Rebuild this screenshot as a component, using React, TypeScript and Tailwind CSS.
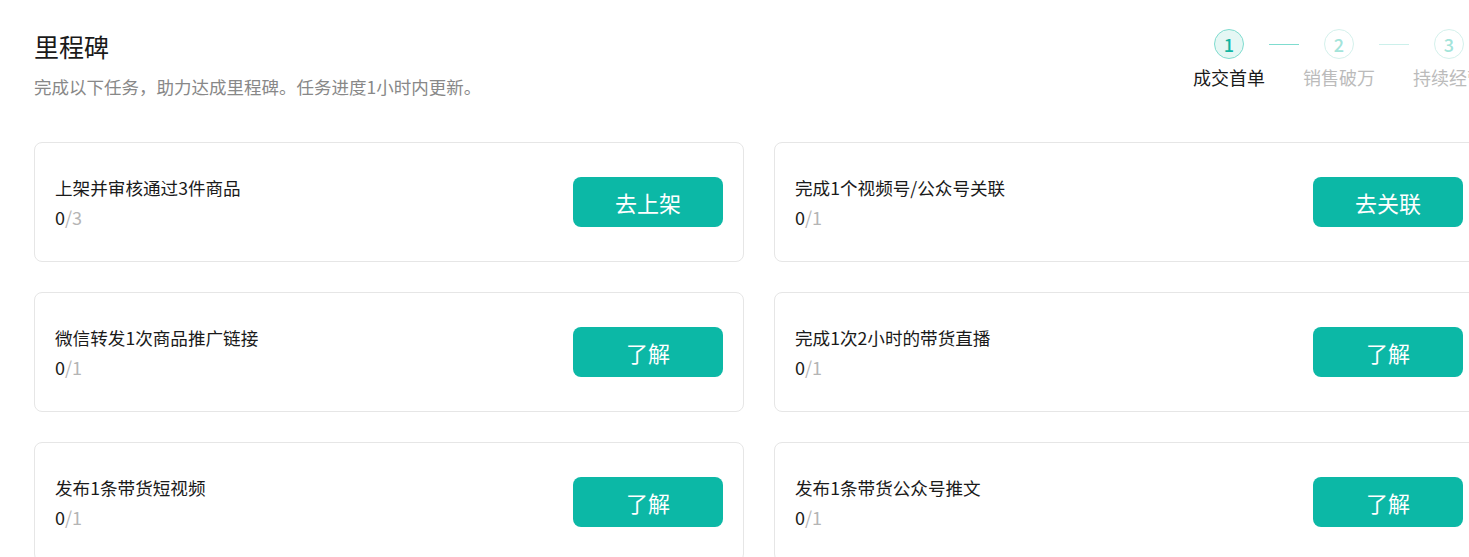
const tasks = [
  { title: "上架并审核通过3件商品", done: 0, total: 3, action: "去上架" },
  { title: "完成1个视频号/公众号关联", done: 0, total: 1, action: "去关联" },
  { title: "微信转发1次商品推广链接", done: 0, total: 1, action: "了解" },
  { title: "完成1次2小时的带货直播", done: 0, total: 1, action: "了解" },
  { title: "发布1条带货短视频", done: 0, total: 1, action: "了解" },
  { title: "发布1条带货公众号推文", done: 0, total: 1, action: "了解" },
];

const steps = ["成交首单", "销售破万", "持续经营"];

export default function App() {
  return (
    <div
      className="min-h-screen bg-white overflow-hidden"
      style={{ fontFamily: '"Noto Sans CJK SC", "Noto Sans", sans-serif' }}
    >
      <div className="w-[1450px] ml-[34px] pt-[28px]">
        {/* Header */}
        <div className="flex items-start justify-between">
          <div>
            <h1 className="text-[25px] leading-[36px] text-[#1a1a1a]">里程碑</h1>
            <p className="mt-[11px] text-[17.5px] leading-[24px] text-[#888888]">
              完成以下任务，助力达成里程碑。任务进度1小时内更新。
            </p>
          </div>

          {/* Steps */}
          <div className="flex pt-[1px]">
            {steps.map((label, i) => {
              const active = i === 0;
              return (
                <div key={label} className="flex">
                  {i > 0 && (
                    <div className="w-[40px] h-[30px] flex items-center justify-center">
                      <div
                        className={
                          i === 1
                            ? "w-[30px] h-px bg-[#7fdccf]"
                            : "w-[30px] h-px bg-[#ccf0eb]"
                        }
                      />
                    </div>
                  )}
                  <div className="w-[70px] flex flex-col items-center">
                    <div
                      className={
                        active
                          ? "w-[30px] h-[30px] rounded-full border border-[#7fdccf] bg-[#e5f7f4] text-[#12b5a2] flex items-center justify-center text-[18px] font-medium"
                          : "w-[30px] h-[30px] rounded-full border border-[#d4f1ec] bg-white text-[#a3e4da] flex items-center justify-center text-[18px] font-medium"
                      }
                    >
                      {i + 1}
                    </div>
                    <div
                      className={
                        active
                          ? "mt-[3px] text-[18px] leading-[30px] whitespace-nowrap text-[#1a1a1a]"
                          : "mt-[3px] text-[18px] leading-[30px] whitespace-nowrap text-[#bbbbbb]"
                      }
                    >
                      {label}
                    </div>
                  </div>
                </div>
              );
            })}
          </div>
        </div>

        {/* Task cards */}
        <div className="mt-[43px] grid grid-cols-2 gap-x-[30px] gap-y-[30px]">
          {tasks.map((t) => (
            <div
              key={t.title}
              className="h-[120px] rounded-[8px] border border-[#e6e6e6] pl-[20px] pr-[20px] flex items-center justify-between"
            >
              <div>
                <div className="text-[17.6px] leading-[28px] text-[#1a1a1a]">{t.title}</div>
                <div className="mt-[2px] text-[18px] leading-[26px]">
                  <span className="text-[#1a1a1a]">{t.done}</span>
                  <span className="text-[#b5b5b5]">/{t.total}</span>
                </div>
              </div>
              <button className="w-[150px] h-[50px] rounded-[8px] bg-[#0cb8a6] text-white text-[22px]">
                {t.action}
              </button>
            </div>
          ))}
        </div>
      </div>
    </div>
  );
}
